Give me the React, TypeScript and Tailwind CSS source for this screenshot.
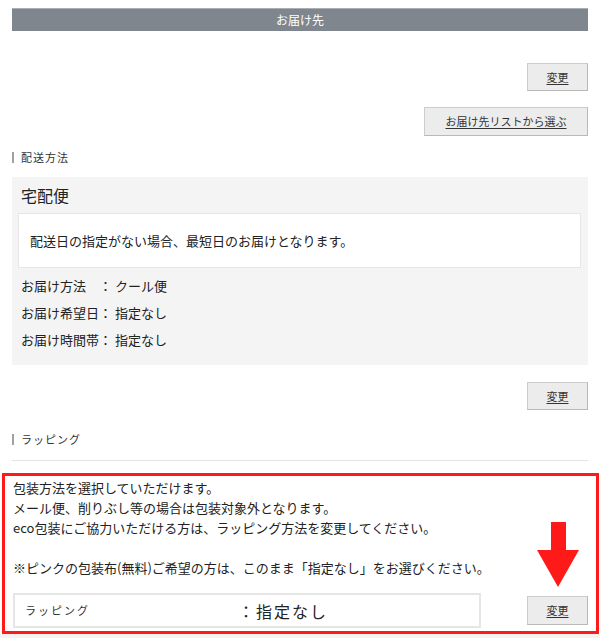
import { FC, ReactNode } from 'react'

const font = {
  fontFamily: '"Noto Sans CJK JP", "Liberation Sans", sans-serif',
}

const Btn: FC<{ children: ReactNode; className?: string }> = ({
  children,
  className = '',
}) => {
  return (
    <button
      className={`flex items-center justify-center bg-[#ececec] border border-[#cccccc] border-r-[#b9b9b9] border-b-[#b9b9b9] text-[11px] text-[#333] underline underline-offset-2 ${className}`}
    >
      {children}
    </button>
  )
}

const SectionLabel: FC<{ text: string }> = ({ text }) => {
  return (
    <div className="flex items-center gap-[7px] h-[12px]">
      <span className="w-[2px] h-[11px] bg-[#a0a0a0]" />
      <span className="text-[11px] leading-[12px] tracking-[1px] text-[#333]">
        {text}
      </span>
    </div>
  )
}

const InfoRow: FC<{ label: string; value: string }> = ({ label, value }) => {
  return (
    <div className="flex items-center h-[27px] pl-[9px] text-[13px] text-[#222]">
      <span className="w-[78px]">{label}</span>
      <span className="w-[14px]">：</span>
      <span className="ml-[2px]">{value}</span>
    </div>
  )
}

export default function App() {
  return (
    <div className="w-[600px] bg-white pt-[8px]" style={font}>
      <div className="px-[12px]">
        <div className="h-[23px] bg-[#7f868e] border-t border-t-[#a9aeb4] flex items-center justify-center text-[12px] text-white">
          お届け先
        </div>

        <div className="flex flex-col items-end">
          <Btn className="mt-[32px] w-[61px] h-[28px]">変更</Btn>
          <Btn className="mt-[16px] w-[164px] h-[29px]">お届け先リストから選ぶ</Btn>
        </div>

        <div className="mt-[15px]">
          <SectionLabel text="配送方法" />
        </div>

        <div className="mt-[14px] bg-[#f4f4f4] pt-[6px] pb-[12px]">
          <div className="pl-[9px] text-[16px] leading-[24px] text-[#222]">
            宅配便
          </div>
          <div className="mt-[6px] ml-[6px] mr-[7px] h-[55px] bg-white border border-[#e6e6e6] flex items-center pl-[11px] text-[13px] text-[#222]">
            配送日の指定がない場合、最短日のお届けとなります。
          </div>
          <div className="mt-[4px]">
            <InfoRow label="お届け方法" value="クール便" />
            <InfoRow label="お届け希望日" value="指定なし" />
            <InfoRow label="お届け時間帯" value="指定なし" />
          </div>
        </div>

        <div className="flex justify-end">
          <Btn className="mt-[17px] w-[61px] h-[28px]">変更</Btn>
        </div>

        <div className="mt-[23px]">
          <SectionLabel text="ラッピング" />
        </div>
        <div className="mt-[15px] h-px bg-[#e2e2e2]" />
      </div>

      <div className="relative mt-[12px] ml-[2px] w-[597px] border-[3px] border-[#ff1a1a] pt-[2px] pb-[3px] px-[8px]">
        <div className="text-[13px] leading-[20px] text-[#222]">
          <p>包装方法を選択していただけます。</p>
          <p>メール便、削りぶし等の場合は包装対象外となります。</p>
          <p>eco包装にご協力いただける方は、ラッピング方法を変更してください。</p>
          <p>&nbsp;</p>
          <p>※ピンクの包装布(無料)ご希望の方は、このまま「指定なし」をお選びください。</p>
        </div>

        <div className="mt-[15px] flex items-center justify-between">
          <div className="w-[468px] h-[35px] bg-white border-2 border-[#e6e6e6] flex items-center">
            <span className="pl-[10px] w-[223px] text-[11px] tracking-[2px] text-[#333]">
              ラッピング
            </span>
            <span className="text-[16px] tracking-[2px] text-[#222]">：指定なし</span>
          </div>
          <Btn className="w-[61px] h-[29px]">変更</Btn>
        </div>

        <svg
          className="absolute right-[17px] top-[46px]"
          width="42"
          height="65"
          viewBox="0 0 42 65"
        >
          <path d="M14 0 H29 V28 H42 L21 65 L0 28 H14 Z" fill="#ff1a1a" />
        </svg>
      </div>

      <div className="h-[10px] bg-[#f3f3f3]" />
    </div>
  )
}
